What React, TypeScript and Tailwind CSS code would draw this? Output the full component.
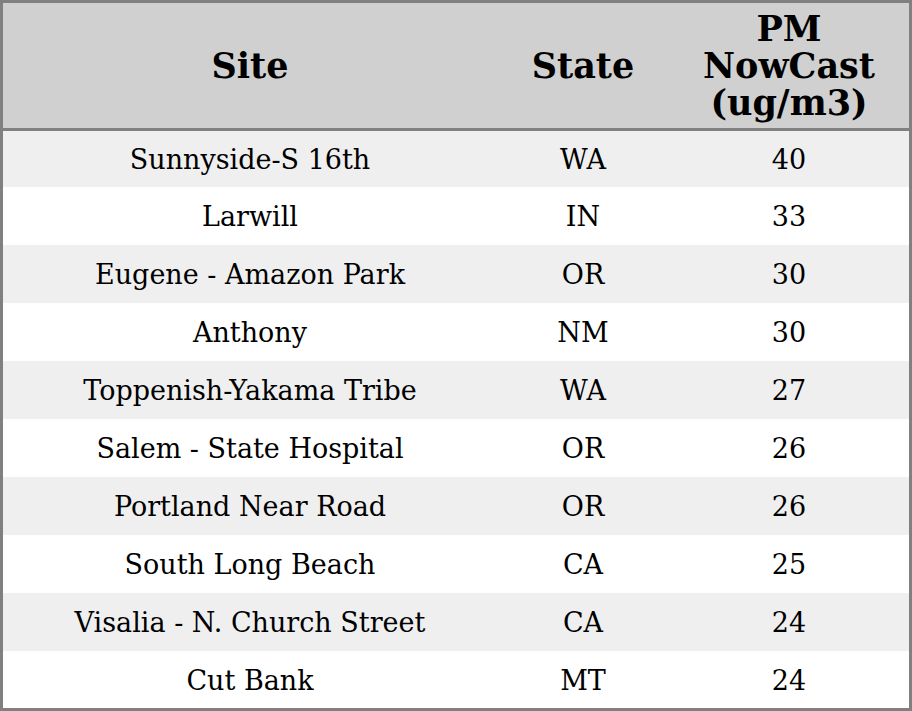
import React from 'react';

interface Row {
  site: string;
  state: string;
  value: number;
}

const rows: Row[] = [
  { site: 'Sunnyside-S 16th', state: 'WA', value: 40 },
  { site: 'Larwill', state: 'IN', value: 33 },
  { site: 'Eugene - Amazon Park', state: 'OR', value: 30 },
  { site: 'Anthony', state: 'NM', value: 30 },
  { site: 'Toppenish-Yakama Tribe', state: 'WA', value: 27 },
  { site: 'Salem - State Hospital', state: 'OR', value: 26 },
  { site: 'Portland Near Road', state: 'OR', value: 26 },
  { site: 'South Long Beach', state: 'CA', value: 25 },
  { site: 'Visalia - N. Church Street', state: 'CA', value: 24 },
  { site: 'Cut Bank', state: 'MT', value: 24 },
];

const App: React.FC = () => {
  return (
    <div className="w-[912px] h-[711px] overflow-hidden border-[3px] border-[#808080] bg-white text-black font-['DejaVu_Serif',serif] flex flex-col">
      <div className="grid grid-cols-[494px_172px_240px] h-[128px] shrink-0 bg-[#d0d0d0] border-b-[3px] border-[#808080] text-[35px] font-bold leading-[37px]">
        <div className="flex items-center justify-center text-center">Site</div>
        <div className="flex items-center justify-center text-center">State</div>
        <div className="flex items-center justify-center text-center">
          PM
          <br />
          NowCast
          <br />
          (ug/m3)
        </div>
      </div>
      <div className="flex flex-col text-[27px]">
        {rows.map((r, i) => (
          <div
            key={r.site}
            className={`grid grid-cols-[494px_172px_240px] shrink-0 items-center text-center ${
              i === 0 ? 'h-[56px] pt-[2px]' : i === rows.length - 1 ? 'h-[57px] pt-[3px]' : 'h-[58px] pt-[3px]'
            } ${i % 2 === 0 ? 'bg-[#efefef]' : 'bg-white'}`}
          >
            <div>{r.site}</div>
            <div>{r.state}</div>
            <div>{r.value}</div>
          </div>
        ))}
      </div>
    </div>
  );
};

export default App;
